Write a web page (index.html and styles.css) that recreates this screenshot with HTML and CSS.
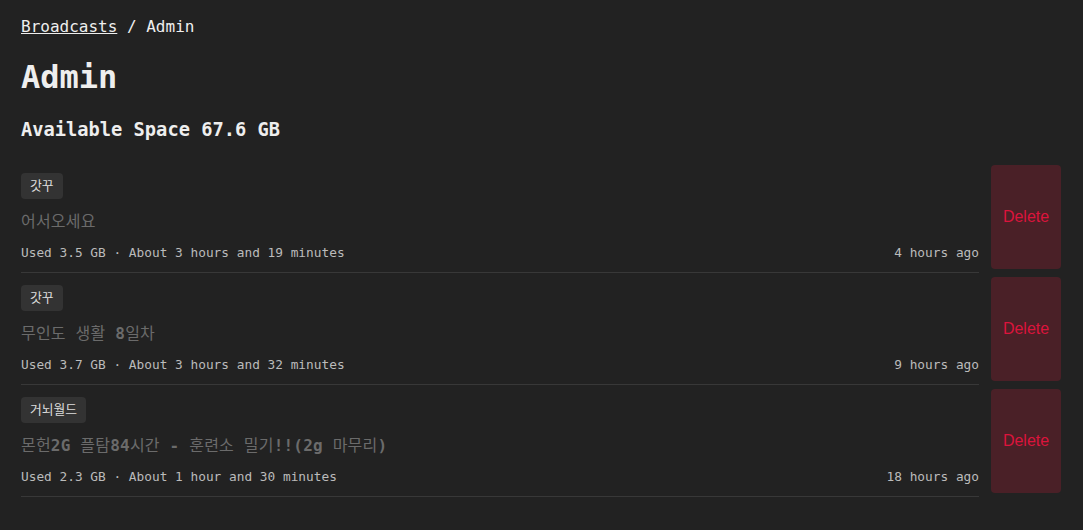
FILE: index.html
```html
<!DOCTYPE html>
<html lang="ko">
<head>
    <meta charset="UTF-8">
    <meta name="viewport" content="width=device-width, initial-scale=1.0">
    <title>Admin</title>
    <link rel="stylesheet" href="styles.css">
</head>
<body>
    <div class="page">
        <nav class="crumbs"><a href="#">Broadcasts</a> / Admin</nav>
        <h1 class="title">Admin</h1>
        <h3 class="space">Available Space 67.6 GB</h3>

        <ul class="list">
            <li class="row">
                <div class="info">
                    <span class="tag">갓꾸</span>
                    <div class="name">어서오세요</div>
                    <div class="meta">
                        <span>Used 3.5 GB · About 3 hours and 19 minutes</span>
                        <span>4 hours ago</span>
                    </div>
                </div>
                <button class="delete">Delete</button>
            </li>
            <li class="row">
                <div class="info">
                    <span class="tag">갓꾸</span>
                    <div class="name">무인도 생활 <b>8</b>일차</div>
                    <div class="meta">
                        <span>Used 3.7 GB · About 3 hours and 32 minutes</span>
                        <span>9 hours ago</span>
                    </div>
                </div>
                <button class="delete">Delete</button>
            </li>
            <li class="row">
                <div class="info">
                    <span class="tag">거뇌월드</span>
                    <div class="name">몬헌<b>2G</b> 플탐<b>84</b>시간 <b>-</b> 훈련소 밀기<b>!!(2g</b> 마무리<b>)</b></div>
                    <div class="meta">
                        <span>Used 2.3 GB · About 1 hour and 30 minutes</span>
                        <span>18 hours ago</span>
                    </div>
                </div>
                <button class="delete">Delete</button>
            </li>
        </ul>
    </div>
</body>
</html>
```

FILE: styles.css
```css
body {
    margin: 0;
    background-color: #222222;
    color: #eeeeee;
    font-family: "DejaVu Sans Mono", "Noto Sans CJK KR", monospace;
}

.page {
    padding: 15px 22px 20px 21px;
}

.crumbs {
    font-size: 16px;
    line-height: 24px;
}

.crumbs a {
    color: #eeeeee;
    text-decoration: underline;
}

.title {
    margin: 18px 0 0;
    font-size: 32px;
    line-height: 40px;
    font-weight: bold;
}

.space {
    margin: 19px 0 0;
    font-size: 18.72px;
    line-height: 28px;
    font-weight: bold;
}

.list {
    list-style: none;
    margin: 21px 0 0;
    padding: 0;
}

.row {
    display: flex;
    align-items: flex-start;
    gap: 12px;
    margin-bottom: 4px;
}

.info {
    flex: 1;
    padding: 8px 0 10px;
    border-bottom: 1px solid #383838;
}

.tag {
    display: inline-block;
    padding: 0 9px;
    height: 26px;
    line-height: 26px;
    font-size: 12.8px;
    color: #dddddd;
    background-color: #333333;
    border-radius: 4px;
}

.name {
    margin-top: 8px;
    font-size: 16px;
    line-height: 30px;
    letter-spacing: 0.2px;
    color: #6b6b6b;
}

.name b {
    font-weight: bold;
}

.meta {
    display: flex;
    justify-content: space-between;
    margin-top: 6px;
    font-size: 12.8px;
    line-height: 19px;
    color: #bbbbbb;
}

.delete {
    width: 70px;
    height: 104px;
    border: none;
    border-radius: 4px;
    background-color: #4a2027;
    color: #dc143c;
    font-family: "Liberation Sans", Arial, sans-serif;
    font-size: 16px;
    cursor: pointer;
}
```
